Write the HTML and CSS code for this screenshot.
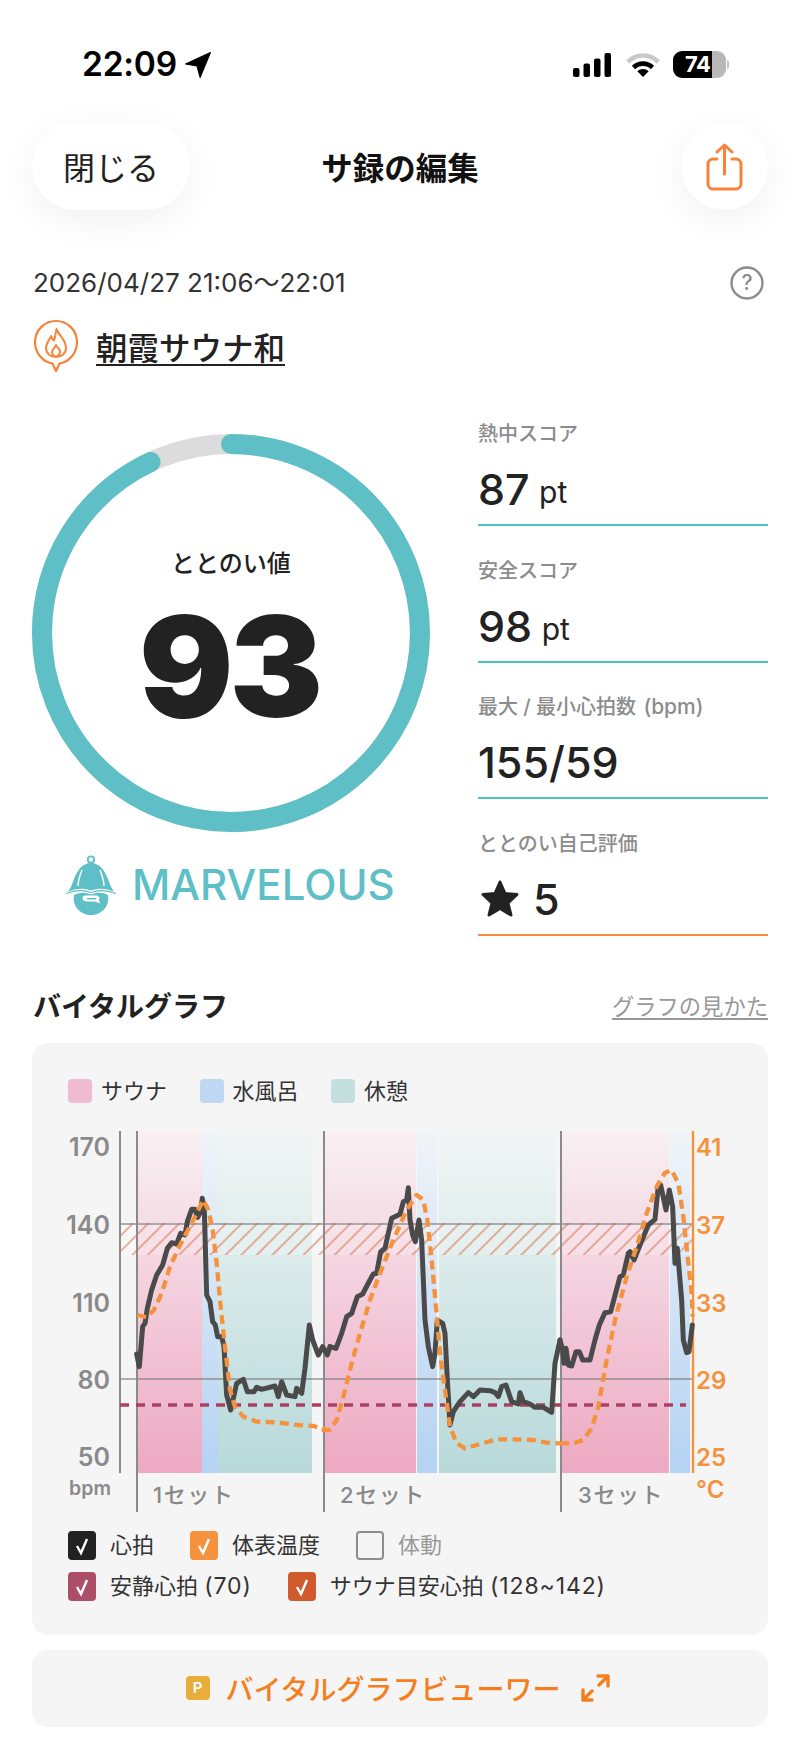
FILE: index.html
```html
<!DOCTYPE html>
<html lang="ja">
<head>
<meta charset="utf-8">
<title>サ録の編集</title>
<link rel="stylesheet" href="styles.css">
</head>
<body>
<div class="page">
  <div class="status">
    <div class="status-left">
      <span class="time">22:09</span>
      <svg class="loc-arrow" viewBox="0 0 25 25"><path d="M24.5 .5 L14.5 24.5 L11.5 13.5 L.5 11.5 Z" fill="#000" stroke="#000" stroke-linejoin="round"/></svg>
    </div>
    <div class="status-right">
      <svg class="signal" viewBox="0 0 38 24"><rect x="0" y="15" width="6.5" height="9" rx="2"/><rect x="10.5" y="10.5" width="6.5" height="13.5" rx="2"/><rect x="21" y="5.5" width="6.5" height="18.5" rx="2"/><rect x="31.5" y="0" width="6.5" height="24" rx="2"/></svg>
      <svg class="wifi" viewBox="0 0 34 24"><path d="M1.8 8.8 A21.5 21.5 0 0 1 32.2 8.8" fill="none" stroke="#c9c9c9" stroke-width="4.6"/><path d="M7.5 14.5 A13.5 13.5 0 0 1 26.5 14.5" fill="none" stroke="#000" stroke-width="4.6"/><path d="M17 24 L11.3 18.3 A8 8 0 0 1 22.7 18.3 Z" fill="#000"/></svg>
      <div class="battery">74</div>
    </div>
  </div>

  <header class="topbar">
    <div class="pill">閉じる</div>
    <h1 class="title">サ録の編集</h1>
    <div class="round-btn">
      <svg class="share" viewBox="0 0 37 48"><path d="M11 16 H7 a5 5 0 0 0 -5 5 V41 a5 5 0 0 0 5 5 H30 a5 5 0 0 0 5 -5 V21 a5 5 0 0 0 -5 -5 H26 M18.5 31 V3 M11 9 L18.5 2 L26 9" fill="none" stroke="#f5843a" stroke-width="3" stroke-linejoin="round" stroke-linecap="round"/></svg>
    </div>
  </header>

  <div class="meta">
    <span class="date">2026/04/27 21:06～22:01</span>
    <svg class="help" viewBox="0 0 34 34"><circle cx="17" cy="17" r="15.5" fill="none" stroke="#8c8c8c" stroke-width="2.4"/><text x="17" y="24" class="help-q">?</text></svg>
  </div>

  <div class="store">
    <svg class="pin" viewBox="0 0 46 54"><path d="M23 52 L19.5 44.5 C9 42.5 2 33.5 2 23 A21 21 0 0 1 44 23 C44 33.5 37 42.5 26.5 44.5 Z" fill="none" stroke="#f5843a" stroke-width="2.2" stroke-linejoin="round"/><path d="M23.5 10 C25 16 33 20 33 29 C33 35 28 38 23 38 C18 38 13 35 13 29 C13 24 16 22 18 17 C19 20 20 21 21 21.5 C22.5 18 22.5 14 23.5 10Z M23 26 C24 29 27.5 30 27 33 C26.5 36 24.5 37.5 23 37.5 C21 37.5 19 35.5 19 33 C19 30.5 22 29 23 26Z" fill="none" stroke="#f5843a" stroke-width="2" stroke-linejoin="round"/></svg>
    <a class="store-name">朝霞サウナ和</a>
  </div>

  <section class="main">
    <div class="score-col">
      <div class="ring-wrap">
        <svg class="ring" viewBox="0 0 398 398">
          <circle cx="199" cy="199" r="189" fill="none" stroke="#dcdcdc" stroke-width="20"/>
          <circle class="ring-arc" cx="199" cy="199" r="189" fill="none" stroke="#5fbfc6" stroke-width="20" stroke-linecap="round" pathLength="100" stroke-dasharray="93 7" transform="rotate(-90 199 199)"/>
        </svg>
        <div class="ring-text">
          <div class="ring-label">ととのい値</div>
          <div class="ring-value">93</div>
        </div>
      </div>
      <div class="rank">
        <svg class="hat" viewBox="-2 -3 52 60">
          <circle cx="24" cy="1.5" r="3.2" fill="none" stroke="#5fbfc6" stroke-width="1.8"/>
          <path d="M24 5 C15 5 10 13 7 21 C5 26 4 30 1 33.5 C9 30.5 16 29.5 24 32.5 C32 29.5 39 30.5 47 33.5 C44 30 43 26 41 21 C38 13 33 5 24 5Z" fill="#5fbfc6"/>
          <path d="M15 12 C13 17 11 22 11 28 M33 12 C35 17 37 22 37 28" fill="none" stroke="#fff" stroke-width="1.4"/>
          <path d="M-1 35.5 C8 32 16 31.5 24 34.5 C32 31.5 40 32 49 35.5" fill="none" stroke="#5fbfc6" stroke-width="1.2"/>
          <path d="M7 37 C13 34 18 34 24 36.5 C30 34 35 34 41 37 C43 49 34 57 24 57 C14 57 5 49 7 37Z" fill="#5fbfc6"/>
          <path d="M18 37.5 H29 C32 37.5 33 40 32 42 L33 45.5 L28 43.5 H20 C15 43.5 14 38.5 18 37.5Z" fill="#fff"/>
          <path d="M20 40 H29 V41.5 H20Z" fill="#5fbfc6"/>
        </svg>
        <span class="rank-text">MARVELOUS</span>
      </div>
    </div>
    <div class="stats">
      <div class="stat">
        <div class="stat-label">熱中スコア</div>
        <div class="stat-value">87 <span class="unit">pt</span></div>
      </div>
      <div class="stat">
        <div class="stat-label">安全スコア</div>
        <div class="stat-value">98 <span class="unit">pt</span></div>
      </div>
      <div class="stat">
        <div class="stat-label">最大 / 最小心拍数 <span class="stat-paren">(bpm)</span></div>
        <div class="stat-value">155/59</div>
      </div>
      <div class="stat stat-self">
        <div class="stat-label">ととのい自己評価</div>
        <div class="stat-value">
          <svg class="star" viewBox="0 0 38 37"><path d="M19 2 L24 13.5 L36 14.5 L27 23 L30 35 L19 28.5 L8 35 L11 23 L2 14.5 L14 13.5 Z" fill="#222" stroke="#222" stroke-width="3" stroke-linejoin="round"/></svg>
          <span>5</span>
        </div>
      </div>
    </div>
  </section>

  <div class="section-head">
    <h2 class="section-title">バイタルグラフ</h2>
    <a class="section-link">グラフの見かた</a>
  </div>

  <section class="card">
    <div class="legend">
      <span class="legend-item"><i class="swatch sw-sauna"></i>サウナ</span>
      <span class="legend-item"><i class="swatch sw-cold"></i>水風呂</span>
      <span class="legend-item"><i class="swatch sw-rest"></i>休憩</span>
    </div>

    <svg class="chart" viewBox="32 1120 736 395">
      <defs>
        <linearGradient id="gs" x1="0" y1="0" x2="0" y2="1"><stop offset="0" stop-color="#f8f0f3"/><stop offset="1" stop-color="#eda9c2"/></linearGradient>
        <linearGradient id="gc" x1="0" y1="0" x2="0" y2="1"><stop offset="0" stop-color="#f0f4f8"/><stop offset="1" stop-color="#b4d2f3"/></linearGradient>
        <linearGradient id="gr" x1="0" y1="0" x2="0" y2="1"><stop offset="0" stop-color="#f2f5f5"/><stop offset="1" stop-color="#b7d9da"/></linearGradient>
        <pattern id="hatch" patternUnits="userSpaceOnUse" width="11" height="11" patternTransform="rotate(45)"><rect width="11" height="11" fill="#fff" fill-opacity=".2"/><line x1="2" y1="0" x2="2" y2="11" stroke="#d9623a" stroke-opacity=".6" stroke-width="1.6"/></pattern>
      </defs>

      <rect x="137" y="1131" width="65" height="342" fill="url(#gs)"/>
      <rect x="202" y="1131" width="16" height="342" fill="url(#gc)"/>
      <rect x="218" y="1131" width="94" height="342" fill="url(#gr)"/>
      <rect x="324" y="1131" width="92" height="342" fill="url(#gs)"/>
      <rect x="417" y="1131" width="20" height="342" fill="url(#gc)"/>
      <rect x="439" y="1131" width="117" height="342" fill="url(#gr)"/>
      <rect x="561" y="1131" width="108" height="342" fill="url(#gs)"/>
      <rect x="670" y="1131" width="20" height="342" fill="url(#gc)"/>

      <rect x="120" y="1223" width="573" height="32" fill="url(#hatch)"/>
      <line class="grid" x1="120" y1="1224" x2="693" y2="1224"/>
      <line class="grid" x1="120" y1="1379" x2="693" y2="1379"/>

      <line class="axis" x1="120" y1="1131" x2="120" y2="1473"/>
      <line class="axis" x1="137" y1="1131" x2="137" y2="1512"/>
      <line class="axis" x1="324" y1="1131" x2="324" y2="1512"/>
      <line class="axis" x1="561" y1="1131" x2="561" y2="1512"/>
      <line class="axis-r" x1="693" y1="1131" x2="693" y2="1473"/>

      <line class="rest-line" x1="120" y1="1405" x2="686" y2="1405"/>

      <g transform="translate(30 1120) scale(.33333)">
        <polyline class="hr" points="320,702 328,740 338,620 345,610 352,565 365,510 380,465 398,435 412,385 425,368 440,372 452,340 465,345 472,305 485,268 495,268 503,292 512,275 517,235 523,270 530,525 540,545 548,605 556,615 563,650 575,650 582,680 590,825 602,870 610,835 620,790 640,778 652,815 672,815 680,802 695,808 735,798 745,830 755,785 770,825 795,830 800,805 815,820 825,745 838,615 848,660 865,705 878,680 892,705 900,680"/>
        <polyline class="temp" points="322,585 350,592 372,570 395,520 420,440 450,375 490,300 520,240 535,270 548,330 560,430 572,560 585,680 600,810 615,860 640,890 680,905 740,907 800,915 850,918 890,930"/>
      </g>
      <g transform="translate(310 1120) scale(.33333)">
        <polyline class="hr" points="60,680 78,685 95,640 110,590 125,580 142,530 158,522 180,480 190,462 200,460 212,395 225,385 245,295 270,283 280,245 290,240 295,203 300,300 308,345 316,365 327,300 335,360 345,600 355,680 368,740 375,700 382,600 398,610 405,640 412,780 420,915 430,875 450,845 475,818 490,830 510,810 540,812 555,818 565,830 575,800 588,795 605,845 625,852 630,818 640,845 660,852 675,862 700,862 725,877 735,730 750,660"/>
        <polyline class="temp" points="35,930 60,930 80,900 100,830 125,730 150,640 180,540 210,460 250,360 290,270 320,225 340,240 352,300 365,420 378,560 390,700 405,810 420,920 440,970 465,985 510,972 560,958 610,958 670,960 710,968 750,970"/>
      </g>
      <g transform="translate(540 1120) scale(.33333)">
        <polyline class="hr" points="60,660 68,690 72,730 78,685 85,735 95,738 108,695 118,695 128,720 150,720 165,660 178,615 195,578 212,575 240,470 250,465 265,400 270,395 282,420 300,375 325,315 345,298 355,195 362,195 378,270 388,210 398,260 405,430 412,385 425,540 430,660 440,698 447,695 457,615"/>
        <polyline class="temp" points="60,970 100,970 130,960 155,925 175,860 200,720 225,600 260,470 290,380 320,280 350,200 375,158 395,150 415,190 430,290 445,430 455,520 458,590"/>
      </g>

      <text class="yl" x="110" y="1156">170</text>
      <text class="yl" x="110" y="1234">140</text>
      <text class="yl" x="110" y="1312">110</text>
      <text class="yl" x="110" y="1389">80</text>
      <text class="yl" x="110" y="1466">50</text>
      <text class="bpm" x="111" y="1495">bpm</text>

      <text class="yr" x="696" y="1156">41</text>
      <text class="yr" x="696" y="1234">37</text>
      <text class="yr" x="696" y="1312">33</text>
      <text class="yr" x="696" y="1389">29</text>
      <text class="yr" x="696" y="1466">25</text>
      <text class="yr" x="696" y="1498">°C</text>

      <text class="setl" x="153" y="1503">1セット</text>
      <text class="setl" x="340" y="1503">2セット</text>
      <text class="setl" x="578" y="1503">3セット</text>
    </svg>

    <div class="checks">
      <div class="check-row">
        <span class="check-item"><i class="box box-black"><svg viewBox="0 0 28 29"><path d="M9 15 L13 22 L19 8"/></svg></i>心拍</span>
        <span class="check-item"><i class="box box-orange"><svg viewBox="0 0 28 29"><path d="M9 15 L13 22 L19 8"/></svg></i>体表温度</span>
        <span class="check-item off"><i class="box box-empty"></i>体動</span>
      </div>
      <div class="check-row">
        <span class="check-item"><i class="box box-crimson"><svg viewBox="0 0 28 29"><path d="M9 15 L13 22 L19 8"/></svg></i><span>安静心拍 <span class="num">(70)</span></span></span>
        <span class="check-item"><i class="box box-red"><svg viewBox="0 0 28 29"><path d="M9 15 L13 22 L19 8"/></svg></i><span>サウナ目安心拍 <span class="num">(128~142)</span></span></span>
      </div>
    </div>
  </section>

  <div class="viewer">
    <span class="p-badge">P</span>
    <span class="viewer-text">バイタルグラフビューワー</span>
    <svg class="expand" viewBox="0 0 29 28"><path d="M17 2 H27 V12 M27 2 L18 11 M11 26 H2 V16 M2 26 L11 17" fill="none" stroke="#f57f20" stroke-width="3.4" stroke-linecap="round" stroke-linejoin="round"/></svg>
  </div>
</div>
</body>
</html>
```
FILE: styles.css
```css
* { box-sizing: border-box; }
html, body { margin: 0; padding: 0; background: #fff; }
body {
  font-family: Inter, "Noto Sans CJK JP", sans-serif;
  color: #222;
}
.page { width: 800px; height: 1739px; overflow: hidden; }

/* status bar */
.status {
  height: 122px;
  padding: 51px 74px 0 82px;
  display: flex;
  justify-content: space-between;
  align-items: flex-start;
}
.status-left { display: flex; align-items: center; gap: 8px; height: 27px; }
.time { font-size: 33.5px; font-weight: 600; line-height: 27px; color: #000; letter-spacing: -.2px; }
.loc-arrow { width: 26px; height: 26px; }
.status-right { display: flex; align-items: center; gap: 15px; height: 27px; }
.signal { width: 38px; height: 24px; fill: #000; }
.wifi { width: 34px; height: 24px; }
.battery {
  position: relative;
  width: 53px;
  height: 27px;
  margin-left: -2px;
  border-radius: 9px;
  background: linear-gradient(90deg, #000 73%, #b8b8b8 73%);
  color: #fff;
  font-size: 22px;
  font-weight: 700;
  line-height: 27px;
  letter-spacing: -.6px;
  padding-left: 12px;
}
.battery::after {
  content: "";
  position: absolute;
  right: -3px;
  top: 9px;
  width: 2px;
  height: 9px;
  border-radius: 0 3px 3px 0;
  background: #c4c4c4;
}

/* top bar */
.topbar {
  height: 88px;
  margin: 0 32px;
  display: flex;
  align-items: center;
}
.pill {
  flex: none;
  width: 158px;
  height: 88px;
  border-radius: 44px;
  background: #fff;
  box-shadow: 0 10px 36px rgba(0,0,0,.06);
  display: flex;
  align-items: center;
  justify-content: center;
  font-size: 32px;
}
.title {
  flex: 1;
  margin: 0;
  padding-right: 71px;
  text-align: center;
  font-size: 31.5px;
  font-weight: 700;
  color: #111;
}
.round-btn {
  flex: none;
  width: 87px;
  height: 88px;
  border-radius: 50%;
  background: #fff;
  box-shadow: 0 10px 36px rgba(0,0,0,.06);
  display: flex;
  align-items: center;
  justify-content: center;
}
.share { width: 37px; height: 48px; margin-top: 2px; }

/* meta rows */
.meta {
  margin: 55px 36px 0 33px;
  height: 36px;
  display: flex;
  align-items: center;
  justify-content: space-between;
}
.date { font-size: 26px; color: #333; line-height: 36px; }
.help { width: 34px; height: 34px; }
.help-q { font-size: 21px; font-weight: 500; fill: #8c8c8c; text-anchor: middle; }
.store {
  margin: 18px 32px 0 33px;
  height: 54px;
  display: flex;
  align-items: center;
  gap: 17px;
}
.pin { width: 46px; height: 54px; }
.store-name {
  font-size: 31.5px;
  font-weight: 500;
  text-decoration: underline;
  text-decoration-thickness: 2px;
  text-underline-offset: 4px;
  color: #222;
}

/* score */
.main {
  margin: 47px 32px 0;
  display: flex;
  justify-content: space-between;
  align-items: flex-start;
}
.score-col { width: 398px; padding-top: 14px; }
.ring-wrap { position: relative; width: 398px; height: 398px; }
.ring { display: block; width: 398px; height: 398px; }
.ring-text {
  position: absolute;
  inset: 0;
  padding-top: 115px;
  text-align: center;
}
.ring-label { font-size: 24px; font-weight: 500; line-height: 30px; color: #222; }
.ring-value {
  margin-top: 27px;
  padding-right: 4px;
  font-size: 140px;
  font-weight: 900;
  line-height: 120px;
  letter-spacing: -4px;
  color: #222;
}
.rank {
  margin-top: 23px;
  padding-left: 33px;
  display: flex;
  align-items: center;
  gap: 15px;
}
.hat { width: 52px; height: 60px; }
.rank-text { font-size: 42px; font-weight: 550; color: #5fbfc6; line-height: 60px; }

.stats {
  width: 290px;
  display: flex;
  flex-direction: column;
  gap: 30.5px;
}
.stat { height: 106px; border-bottom: 2px solid #4fc1c4; }
.stat-self { border-bottom-color: #f58b3b; }
.stat-label { font-size: 20px; font-weight: 500; line-height: 28px; color: #8c8c8c; }
.stat-paren { font-size: 21px; margin-left: 2px; }
.stat-value {
  margin-top: 13px;
  height: 56px;
  display: flex;
  align-items: center;
  font-size: 43px;
  font-weight: 550;
  line-height: 56px;
  white-space: pre;
  color: #222;
}
.unit { font-size: 30px; font-weight: 400; margin: 6px 0 0 -2px; }
.star { width: 38px; height: 37px; margin: 0 14px 0 3px; }

/* vital graph */
.section-head {
  margin: 49px 32px 18px 33px;
  height: 40px;
  display: flex;
  align-items: center;
  justify-content: space-between;
}
.section-title { margin: 0; font-size: 28px; font-weight: 700; color: #222; }
.section-link { font-size: 22.3px; color: #999; text-decoration: underline; text-underline-offset: 3px; }

.card {
  margin: 0 32px;
  height: 592px;
  padding-top: 36px;
  background: #f5f5f5;
  border-radius: 16px;
}
.legend { display: flex; gap: 32.5px; padding-left: 36px; height: 24px; margin-bottom: 17px; }
.legend-item { display: flex; align-items: center; gap: 9px; font-size: 22px; line-height: 24px; color: #333; }
.swatch { display: block; width: 24px; height: 24px; border-radius: 4px; }
.sw-sauna { background: #efbccf; }
.sw-cold { background: #bed8f3; }
.sw-rest { background: #c5dfdf; }

.chart { display: block; width: 736px; height: 395px; }
.grid { stroke: #7d7d7d; stroke-width: 1.4; stroke-opacity: .8; }
.axis { stroke: #8a8a8a; stroke-width: 2; }
.axis-r { stroke: #f5923e; stroke-width: 2.4; }
.rest-line { stroke: #ad3f62; stroke-width: 3.6; stroke-dasharray: 9 7; }
.hr { fill: none; stroke: #4a4a4a; stroke-width: 15; stroke-linejoin: round; stroke-linecap: round; }
.temp { fill: none; stroke: #f5923e; stroke-width: 13; stroke-linejoin: round; stroke-dasharray: 27 16; }
.yl { font-size: 25px; font-weight: 600; fill: #8a8a8a; text-anchor: end; }
.bpm { font-size: 19.5px; font-weight: 600; fill: #8a8a8a; text-anchor: end; }
.yr { font-size: 24px; font-weight: 600; fill: #f5923e; }
.setl { font-size: 22px; font-weight: 500; fill: #888; letter-spacing: 1.6px; }

.checks { margin-top: 16px; padding-left: 36px; display: flex; flex-direction: column; gap: 12px; }
.check-row { display: flex; height: 29px; }
.check-item {
  display: flex;
  align-items: center;
  gap: 14px;
  font-size: 22px;
  line-height: 29px;
  color: #333;
  margin-right: 36px;
}
.num { font-size: 23px; letter-spacing: .9px; }
.off { color: #999; }
.box { display: block; width: 28px; height: 29px; border-radius: 4px; }
.box svg { display: block; width: 28px; height: 29px; fill: none; stroke: #fff; stroke-width: 2.4; }
.box-black { background: #222; }
.box-orange { background: #f5923e; }
.box-crimson { background: #ad4e68; }
.box-red { background: #cf5a2c; }
.box-empty { border: 2.5px solid #8c8c8c; }

.viewer {
  margin: 15px 32px 0;
  height: 77px;
  padding-right: 4px;
  background: #f5f5f5;
  border-radius: 16px;
  display: flex;
  align-items: center;
  justify-content: center;
}
.p-badge {
  width: 24px;
  height: 24px;
  border-radius: 4px;
  background: #e8ad3a;
  color: #fff;
  font-size: 15px;
  font-weight: 600;
  line-height: 24px;
  text-align: center;
}
.viewer-text { margin-left: 16px; font-size: 28px; font-weight: 500; color: #f57f20; }
.expand { width: 29px; height: 28px; margin-left: 21px; }
```
